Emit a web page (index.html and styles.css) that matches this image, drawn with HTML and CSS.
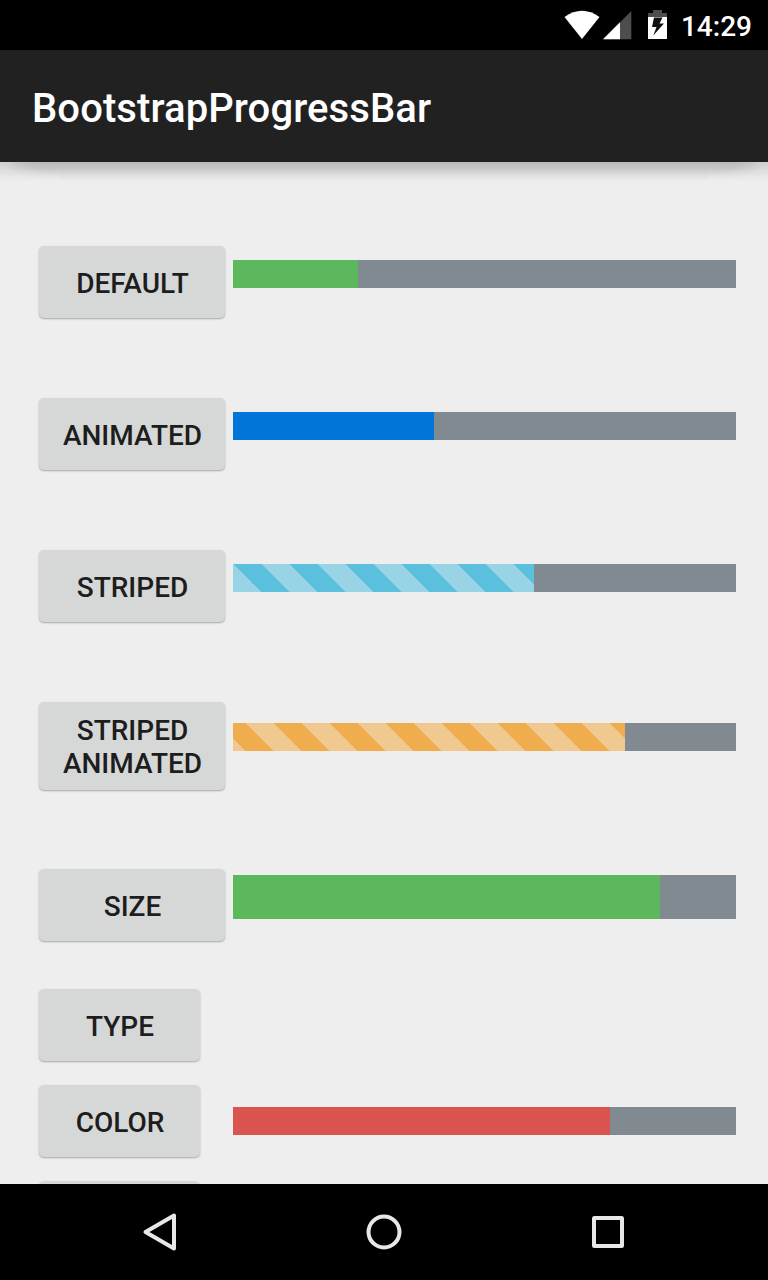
FILE: index.html
```html
<!DOCTYPE html>
<html lang="en">
<head>
<meta charset="utf-8">
<title>BootstrapProgressBar</title>
<link rel="stylesheet" href="styles.css">
</head>
<body>
<div class="screen">
  <div class="status">
    <svg class="status-icons" width="112" height="50" viewBox="0 0 112 50">
      <path d="M4.5 17 Q22 4.500 39.500 17 L22 39Z" fill="#fff"/>
      <path d="M43 39.300L71.300 11V39.300Z" fill="#4d4d4d"/>
      <path d="M43 39.300L60 22.300V39.300Z" fill="#fff"/>
      <path d="M88 13H93V10H102V13H107V17H88Z" fill="#4d4d4d"/>
      <path d="M88 17H107V39H88Z" fill="#fff"/>
      <path d="M94 17.500H102.500L99.500 23.500H104L93.300 35.500L96.500 27H92Z" fill="#111"/>
    </svg>
    <span class="clock">14:29</span>
  </div>
  <header class="appbar"><h1 class="title">BootstrapProgressBar</h1></header>
  <main class="content">
    <div class="row">
      <button class="btn">DEFAULT</button>
      <div class="track"><div class="fill success" style="width:125px"></div></div>
    </div>
    <div class="row">
      <button class="btn">ANIMATED</button>
      <div class="track"><div class="fill primary" style="width:201px"></div></div>
    </div>
    <div class="row">
      <button class="btn">STRIPED</button>
      <div class="track"><div class="fill info" style="width:301px"></div></div>
    </div>
    <div class="row row-tall">
      <button class="btn btn-tall">STRIPED<br>ANIMATED</button>
      <div class="track track-low"><div class="fill warning" style="width:392px"></div></div>
    </div>
    <div class="row row-size">
      <button class="btn">SIZE</button>
      <div class="track track-large"><div class="fill success" style="width:427px"></div></div>
    </div>
    <div class="row row-compact">
      <button class="btn btn-narrow">TYPE</button>
    </div>
    <div class="row row-compact">
      <button class="btn btn-narrow">COLOR</button>
      <div class="track track-color"><div class="fill danger" style="width:377px"></div></div>
    </div>
    <div class="row row-compact">
      <button class="btn btn-narrow"></button>
    </div>
  </main>
  <nav class="navbar">
    <svg width="768" height="96" viewBox="0 0 768 96" fill="none" stroke="#e8e8e8" stroke-width="4" stroke-linejoin="round">
      <path d="M145.500 48L174 31.500V64.500Z"/>
      <circle cx="384" cy="48" r="15.500"/>
      <rect x="594" y="34" width="28" height="28" rx=".5"/>
    </svg>
  </nav>
</div>
</body>
</html>
```
FILE: styles.css
```css
* { box-sizing: border-box; }
body {
  margin: 0;
  font-family: Roboto, "Liberation Sans", sans-serif;
  font-weight: 500;
}
.screen {
  width: 768px;
  height: 1280px;
  display: flex;
  flex-direction: column;
  overflow: hidden;
  background: #eee;
}
.status {
  height: 50px;
  flex: none;
  display: flex;
  justify-content: flex-end;
  padding-right: 16px;
  background: #000;
  color: #fff;
}
.status-icons { margin-right: 9px; }
.clock { font-size: 28px; line-height: 53px; }
.appbar {
  height: 112px;
  flex: none;
  padding: 0 32px;
  background: #212121;
  color: #fff;
  position: relative;
}
.appbar::after {
  content: "";
  position: absolute;
  left: 0;
  right: 0;
  top: 100%;
  height: 20px;
  background: linear-gradient(rgba(0, 0, 0, .22), rgba(0, 0, 0, .18) 5px, rgba(0, 0, 0, .11) 10px, rgba(0, 0, 0, .03) 16px, transparent);
  mask-image: radial-gradient(ellipse 60px 20px at 60px 0, #000 50%, rgba(0, 0, 0, .5)), linear-gradient(#000, #000), radial-gradient(ellipse 60px 20px at 0 0, #000 50%, rgba(0, 0, 0, .5));
  mask-size: 60px 100%, calc(100% - 120px) 100%, 60px 100%;
  mask-position: left, center, right;
  mask-repeat: no-repeat;
}
.title {
  margin: 0;
  font-size: 40px;
  font-weight: 500;
  line-height: 118px;
  letter-spacing: .1px;
}
.content {
  flex: 1;
  min-height: 0;
  overflow: hidden;
  padding: 84px 32px 0 39px;
}
.row {
  display: flex;
  align-items: flex-start;
  gap: 8px;
  height: 152px;
}
.row-tall { height: 167px; }
.row-size { height: 120px; }
.row-compact { height: 96px; gap: 33px; }
.btn {
  flex: none;
  width: 186px;
  height: 72px;
  padding: 2px 0 0 1px;
  border: 0;
  border-radius: 5px;
  background: #d6d8d7;
  box-shadow: 0 1px 2px rgba(0, 0, 0, .3);
  color: #1d1d1d;
  font: 500 28px/33px Roboto, "Liberation Sans", sans-serif;
  text-align: center;
}
.btn-tall { height: 88px; }
.btn-narrow { width: 161px; }
.track {
  flex: 1;
  height: 28px;
  margin-top: 14px;
  background: #818a91;
}
.track-low { margin-top: 21px; }
.track-large { height: 44px; margin-top: 6px; }
.track-color { margin-top: 22px; }
.fill { height: 100%; }
.success { background: #5cb85c; }
.primary { background: #0275d8; }
.danger { background: #d9534f; }
.info {
  background: repeating-linear-gradient(45deg, #99d4e6 0 19.799px, #5bc0de 19.799px 39.598px);
}
.warning {
  background: repeating-linear-gradient(45deg, #f0ad4e 8.6px 28.399px, #efc98f 28.399px 48.198px);
}
.navbar { height: 96px; flex: none; background: #000; }
.navbar svg { display: block; }
```
